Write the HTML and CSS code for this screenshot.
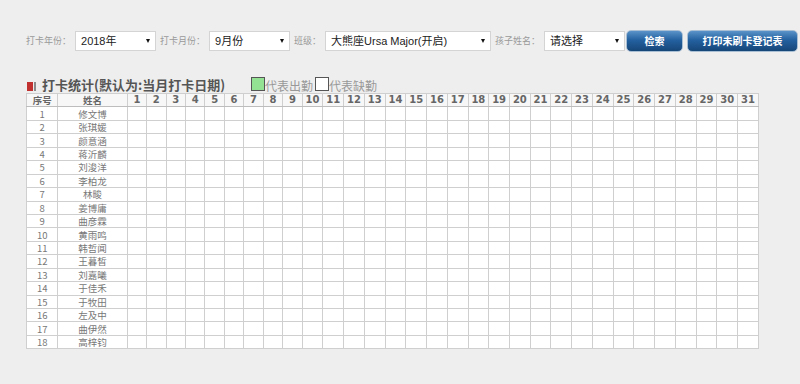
FILE: index.html
```html
<!DOCTYPE html>
<html lang="zh-CN">
  <head>
    <meta charset="UTF-8" />
    <meta name="viewport" content="width=device-width, initial-scale=1.0" />
    <title>打卡统计</title>
    <link rel="stylesheet" href="styles.css">
  </head>
  <body>
    <div class="page">
      <div class="toolbar">
        <span class="label">打卡年份：</span>
        <div class="select sel-year">2018年</div>
        <span class="label">打卡月份：</span>
        <div class="select sel-month">9月份</div>
        <span class="label">班级：</span>
        <div class="select sel-class">大熊座Ursa Major(开启)</div>
        <span class="label">孩子姓名：</span>
        <div class="select sel-child">请选择</div>
        <button class="btn btn-search">检索</button>
        <button class="btn btn-print">打印未刷卡登记表</button>
      </div>

      <div class="section-head">
        <span class="marker"><i class="m-red"></i><i class="m-gray"></i></span>
        <h2>打卡统计(默认为:当月打卡日期)</h2>
        <span class="legend"><i class="box box-on"></i>代表出勤</span>
        <span class="legend"><i class="box"></i>代表缺勤</span>
      </div>

      <table class="stat-table" id="stat-table">
        <colgroup id="cols"></colgroup>
        <thead><tr id="head-row"><th class="th-cn">序号</th><th class="th-cn">姓名</th></tr></thead>
        <tbody id="body-rows"></tbody>
      </table>
    </div>

    <script>
      const names = [
        "修文博", "张琪媛", "颜意涵", "蒋沂麟", "刘浚洋", "李柏龙",
        "林畯", "姜博庸", "曲彦霖", "黄雨鸣", "韩哲闻", "王暮皙",
        "刘嘉曦", "于佳禾", "于牧田", "左及中", "曲伊然", "高梓钧"
      ];
      const days = 31;

      const cols = document.getElementById("cols");
      const widths = [31.3, 69.4];
      for (let d = 1; d <= days; d++) widths.push(d < 10 ? 19.45 : 20.74);
      widths.forEach(function (w) {
        const col = document.createElement("col");
        col.style.width = w + "px";
        cols.appendChild(col);
      });

      const head = document.getElementById("head-row");
      for (let d = 1; d <= days; d++) {
        const th = document.createElement("th");
        th.textContent = d;
        head.appendChild(th);
      }

      const body = document.getElementById("body-rows");
      names.forEach(function (name, i) {
        const tr = document.createElement("tr");
        let html = "<td>" + (i + 1) + "</td><td>" + name + "</td>";
        for (let d = 1; d <= days; d++) html += "<td></td>";
        tr.innerHTML = html;
        body.appendChild(tr);
      });
    </script>
  </body>
</html>
```

FILE: styles.css
```css
body {
  margin: 0;
  background-color: #eeeeee;
  font-family: "Liberation Sans", "Noto Sans CJK SC", sans-serif;
}
.page {
  padding: 29px 0 0 26px;
}
.toolbar {
  display: flex;
  align-items: center;
  height: 23px;
}
.toolbar > * {
  flex-shrink: 0;
}
.label {
  font-size: 9px;
  color: #999;
  margin-right: 4px;
  font-family: "Noto Sans CJK SC", sans-serif;
}
.select {
  position: relative;
  box-sizing: border-box;
  height: 20px;
  line-height: 18px;
  background-color: #fff;
  border: 1px solid #d4d4d4;
  padding-left: 5px;
  font-size: 11px;
  color: #222;
  margin-right: 4px;
}
.select::after {
  content: "";
  position: absolute;
  right: 5px;
  top: 7px;
  border-left: 2.5px solid transparent;
  border-right: 2.5px solid transparent;
  border-top: 4px solid #111;
}
.sel-year { width: 81px; }
.sel-month { width: 81px; }
.sel-class { width: 166px; }
.sel-child { width: 81px; }
.btn {
  box-sizing: border-box;
  height: 22px;
  border: 1px solid #a9bfd4;
  border-radius: 5px;
  background: linear-gradient(#5a93c8, #2461a0 45%, #164678);
  color: #fff;
  font-family: "Noto Sans CJK SC", sans-serif;
  font-size: 10px;
  font-weight: bold;
  padding: 0;
  cursor: pointer;
}
.btn-search {
  width: 57px;
  margin-left: -3px;
  margin-right: 4px;
}
.btn-print {
  width: 111px;
}
.section-head {
  display: flex;
  align-items: center;
  margin-top: 24px;
  height: 18px;
}
.marker {
  display: flex;
  margin: 3px 6px 0 1px;
}
.marker i {
  display: block;
  height: 9px;
}
.m-red {
  width: 6px;
  background-color: #c0302e;
}
.m-gray {
  width: 2px;
  margin-left: 1px;
  background-color: #8a8a8a;
}
.section-head h2 {
  margin: 0 26px 0 0;
  line-height: 16px;
  font-family: "Noto Sans CJK SC", sans-serif;
  font-size: 13px;
  font-weight: bold;
  color: #555;
}
.legend {
  display: flex;
  align-items: center;
  font-family: "Noto Sans CJK SC", sans-serif;
  font-size: 12px;
  color: #999;
  margin-right: 2px;
}
.box {
  display: block;
  width: 12px;
  height: 12px;
  border: 1px solid #555;
  background-color: #fff;
  margin-top: -3px;
}
.box-on {
  background-color: #93e193;
}
.stat-table {
  table-layout: fixed;
  border-collapse: collapse;
  width: 731.5px;
  margin-top: -1px;
  background-color: #fff;
}
.stat-table th,
.stat-table td {
  border: 1px solid #cfcfcf;
  height: 12.44px;
  padding: 0;
  text-align: center;
  line-height: 12px;
  overflow: hidden;
  white-space: nowrap;
}
.stat-table th {
  font-family: "DejaVu Sans", sans-serif;
  font-size: 10px;
  font-weight: bold;
  color: #666;
  background-color: #f7f7f7;
  border-bottom-color: #bdbdbd;
}
.stat-table th.th-cn {
  font-family: "Noto Sans CJK SC", sans-serif;
  font-size: 9.5px;
}
.stat-table td {
  font-family: "Noto Sans CJK SC", sans-serif;
  font-size: 9.5px;
  color: #777;
}
```
